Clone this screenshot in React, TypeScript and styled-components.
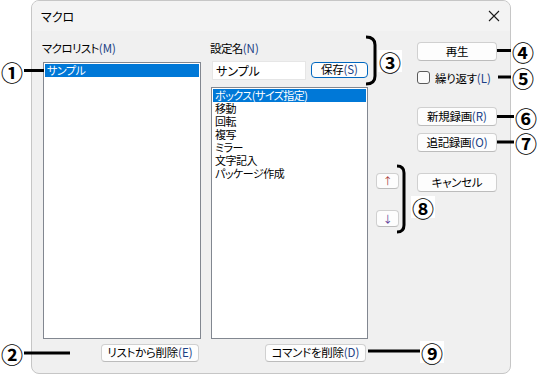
import styled, { createGlobalStyle } from 'styled-components';

const GlobalStyle = createGlobalStyle`
  html, body {
    margin: 0;
    padding: 0;
    background: #ffffff;
  }
  body {
    font-family: 'Noto Sans CJK JP', 'Noto Sans', sans-serif;
    font-size: 12px;
    color: #000;
  }
  * {
    box-sizing: border-box;
  }
`;

const Stage = styled.div`
  position: relative;
  width: 541px;
  height: 375px;
  overflow: hidden;
`;

const Window = styled.div`
  margin-left: 31px;
  width: 480px;
  height: 374px;
  border: 1px solid #c6c6c6;
  border-radius: 8px;
  background: #f0f0f0;
  overflow: hidden;
  display: flex;
  flex-direction: column;
  font-feature-settings: 'palt';
`;

const TitleBar = styled.div`
  height: 30px;
  flex: none;
  display: flex;
  align-items: center;
  justify-content: space-between;
  padding: 0 10px 0 9px;
  background: #f3f3f3;
  font-size: 12px;
`;

const CloseIcon = () => (
  <svg width='12' height='12' viewBox='0 0 12 12'>
    <path d='M1 1 L11 11 M11 1 L1 11' stroke='#1a1a1a' strokeWidth='1.1' />
  </svg>
);

const Body = styled.div`
  display: flex;
  padding: 10px 0 0 11px;
`;

const Column = styled.div<{ $w: number; $ml?: number }>`
  width: ${(p) => p.$w}px;
  margin-left: ${(p) => p.$ml || 0}px;
  display: flex;
  flex-direction: column;
`;

const Label = styled.div`
  height: 14px;
  line-height: 14px;
  font-size: 11.5px;
  letter-spacing: -0.6px;
  margin-left: -1px;
  white-space: nowrap;
`;

const Key = styled.span`
  color: #1b3f86;
  letter-spacing: 0;
`;

const ListBox = styled.div<{ $h: number; $mt: number }>`
  height: ${(p) => p.$h}px;
  margin-top: ${(p) => p.$mt}px;
  background: #ffffff;
  border: 1px solid #828790;
  padding: 1px;
`;

const ListItem = styled.div<{ $selected?: boolean }>`
  height: 13px;
  line-height: 13px;
  padding-left: 2px;
  font-size: 11px;
  letter-spacing: -0.5px;
  white-space: nowrap;
  background: ${(p) => (p.$selected ? '#0078d7' : 'transparent')};
  color: ${(p) => (p.$selected ? '#ffffff' : '#000000')};
`;

const Button = styled.button<{ $w: number; $h?: number; $primary?: boolean }>`
  width: ${(p) => p.$w}px;
  height: ${(p) => p.$h || 19}px;
  padding: 0;
  flex: none;
  font-family: inherit;
  font-size: 11.5px;
  letter-spacing: -0.3px;
  line-height: 1;
  color: #000;
  background: #fdfdfd;
  border: 1px solid ${(p) => (p.$primary ? '#0067c0' : '#d0d0d0')};
  border-bottom-color: ${(p) => (p.$primary ? '#0067c0' : '#bcbcbc')};
  border-radius: 4px;
  display: flex;
  align-items: center;
  justify-content: center;
  white-space: nowrap;
  font-feature-settings: 'palt';
`;

const BottomButton = styled(Button)`
  margin-top: 5px;
  align-self: flex-end;
  margin-right: 2px;
`;

const NameRow = styled.div`
  display: flex;
  align-items: flex-start;
  margin-top: 6px;
  padding-left: 1px;
`;

const NameInput = styled.input`
  width: 94px;
  height: 19px;
  padding: 0 3px;
  border: 1px solid #e6e6e6;
  background: #ffffff;
  font-family: inherit;
  font-size: 12px;
  color: #000;
  outline: none;
  font-feature-settings: 'palt';
`;

const SaveButton = styled(Button)`
  margin-left: 5px;
  margin-top: 1px;
`;

const RightButton = styled(Button)<{ $mt: number }>`
  margin-top: ${(p) => p.$mt}px;
  margin-left: 41px;
`;

const CheckRow = styled.label`
  display: flex;
  align-items: center;
  gap: 5px;
  margin-top: 10px;
  margin-left: 41px;
  height: 13px;
  font-size: 11.5px;
  letter-spacing: -0.3px;
  white-space: nowrap;
`;

const CheckBox = styled.span`
  width: 13px;
  height: 13px;
  flex: none;
  border: 1px solid #5a5a5a;
  border-radius: 3px;
  background: #fbfbfb;
`;

const OrderRow = styled.div`
  display: flex;
  align-items: flex-start;
  margin-top: 21px;
`;

const ArrowStack = styled.div`
  display: flex;
  flex-direction: column;
  gap: 21px;
`;

const ArrowButton = styled(Button)<{ $tint: string }>`
  font-size: 10px;
  color: ${(p) => p.$tint};
`;

const CancelButton = styled(Button)`
  margin-left: 18px;
`;

/* annotations laid over the screenshot */
const Overlay = styled.svg`
  position: absolute;
  left: 0;
  top: 0;
  pointer-events: none;
`;

const Mark = styled.span<{ $x: number; $y: number }>`
  position: absolute;
  left: ${(p) => p.$x - 12}px;
  top: ${(p) => p.$y - 11}px;
  width: 24px;
  height: 22px;
  display: flex;
  align-items: center;
  justify-content: center;
  background: #ffffff;
  font-family: 'Noto Sans CJK JP', sans-serif;
  font-weight: 700;
  font-size: 22px;
  line-height: 22px;
  color: #000;
`;

const marks: [string, number, number][] = [
  ['①', 12, 71],
  ['②', 12, 353],
  ['③', 390, 61],
  ['④', 523, 51],
  ['⑤', 523, 77],
  ['⑥', 526, 117],
  ['⑦', 526, 142],
  ['⑧', 423, 207],
  ['⑨', 432, 352],
];

const macroSteps = [
  'ボックス(サイズ指定)',
  '移動',
  '回転',
  '複写',
  'ミラー',
  '文字記入',
  'パッケージ作成',
];

export default function App() {
  return (
    <Stage>
      <GlobalStyle />
      <Window>
        <TitleBar>
          <span>マクロ</span>
          <CloseIcon />
        </TitleBar>

        <Body>
          <Column $w={158}>
            <Label>
              マクロリスト<Key>(M)</Key>
            </Label>
            <ListBox $h={277} $mt={7}>
              <ListItem $selected>サンプル</ListItem>
            </ListBox>
            <BottomButton $w={98} $h={18}>
              リストから削除<Key>(E)</Key>
            </BottomButton>
          </Column>

          <Column $w={157} $ml={10}>
            <Label>
              設定名<Key>(N)</Key>
            </Label>
            <NameRow>
              <NameInput defaultValue='サンプル' />
              <SaveButton $w={57} $h={16} $primary>
                保存<Key>(S)</Key>
              </SaveButton>
            </NameRow>
            <ListBox $h={252} $mt={7}>
              {macroSteps.map((step, i) => (
                <ListItem key={step} $selected={i === 0}>
                  {step}
                </ListItem>
              ))}
            </ListBox>
            <BottomButton $w={101} $h={18}>
              コマンドを削除<Key>(D)</Key>
            </BottomButton>
          </Column>

          <Column $w={122} $ml={8}>
            <RightButton $w={80} $mt={1}>
              再生
            </RightButton>
            <CheckRow>
              <CheckBox />
              <span>
                繰り返す<Key>(L)</Key>
              </span>
            </CheckRow>
            <RightButton $w={80} $mt={23}>
              新規録画<Key>(R)</Key>
            </RightButton>
            <RightButton $w={80} $mt={7}>
              追記録画<Key>(O)</Key>
            </RightButton>
            <OrderRow>
              <ArrowStack>
                <ArrowButton $w={23} $h={16} $tint='#a8403c'>
                  ↑
                </ArrowButton>
                <ArrowButton $w={23} $h={17} $tint='#5a3a96'>
                  ↓
                </ArrowButton>
              </ArrowStack>
              <CancelButton $w={80}>キャンセル</CancelButton>
            </OrderRow>
          </Column>
        </Body>
      </Window>

      <Overlay width='541' height='375' viewBox='0 0 541 375'>
        <g stroke='#000' strokeWidth='3' fill='none'>
          <line x1='20' y1='70.5' x2='44' y2='70.5' />
          <line x1='20' y1='353' x2='70' y2='353' />
          <line x1='497' y1='50.5' x2='514' y2='50.5' />
          <line x1='498' y1='77' x2='512' y2='77' />
          <line x1='497' y1='116.5' x2='516' y2='116.5' />
          <line x1='497' y1='142' x2='516' y2='142' />
          <line x1='368' y1='351' x2='420' y2='351' />
          <path d='M366 37 Q375 37 375 45 L375 76 Q375 84 366 84' />
          <path d='M397 166 Q404 166 404 173 L404 225 Q404 232 397 232' />
        </g>
      </Overlay>
      {marks.map(([glyph, x, y]) => (
        <Mark key={glyph} $x={x} $y={y}>
          {glyph}
        </Mark>
      ))}
    </Stage>
  );
}
